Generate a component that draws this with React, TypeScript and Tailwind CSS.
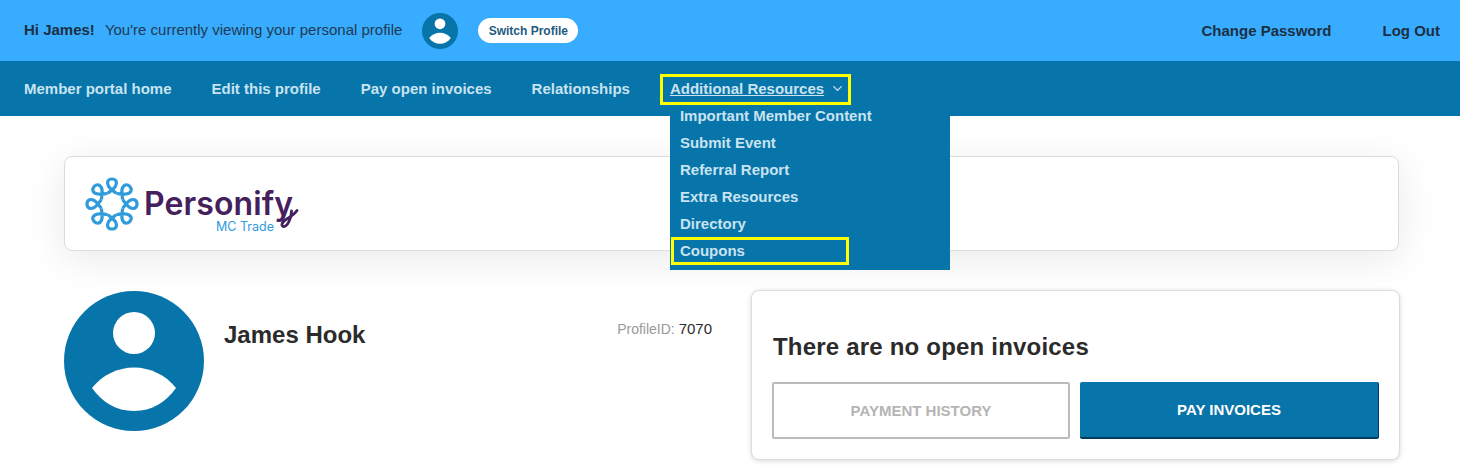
import React from 'react';
import { ChevronDown } from 'lucide-react';

const NAV_LINKS = ['Member portal home', 'Edit this profile', 'Pay open invoices', 'Relationships'];
const MENU_ITEMS = ['Important Member Content', 'Submit Event', 'Referral Report', 'Extra Resources', 'Directory'];
const PETAL_ANGLES = [0, 45, 90, 135, 180, 225, 270, 315];

function UserAvatar({ className }: { className: string }) {
  return (
    <svg viewBox="0 0 140 140" className={className}>
      <circle cx="70" cy="70" r="70" fill="#0774aa" />
      <circle cx="70" cy="42" r="21" fill="#fff" />
      <path d="M28 97C38 84 54 76.5 70 76.5S102 84 112 97C102 111 88 120 70 120S38 111 28 97Z" fill="#fff" />
    </svg>
  );
}

function PersonifyLogo() {
  return (
    <div className="flex items-start">
      <svg viewBox="-27 -27 54 54" className="w-[54px] h-[54px] shrink-0">
        {PETAL_ANGLES.map(a => (
          <path
            key={a}
            transform={`rotate(${a})`}
            d="M-4.35 -10.5C-2.5 -12.5 2 -15 3.6 -18C5.6 -21.8 4 -25 0 -25C-4 -25 -5.6 -21.8 -3.6 -18C-2 -15 2.5 -12.5 4.35 -10.5"
            fill="none"
            stroke="#2f9bdb"
            strokeWidth="3.2"
          />
        ))}
      </svg>
      <div className="relative ml-[5px] mt-[12px] w-[160px] h-[42px]">
        <div className="font-['Inter',sans-serif] font-semibold text-[32px] leading-[30px] tracking-[0.1px] text-[#44205c]">Personify</div>
        <svg viewBox="0 0 22 22" className="absolute left-[134px] top-[19px] w-[22px] h-[22px]">
          <path d="M13.5 3C13.5 11 9 19 5.5 18.5C2.5 18 4 14 8 11.5C12 9 16 7 19 2.5" fill="none" stroke="#44205c" strokeWidth="2.8" strokeLinecap="round" />
        </svg>
        <div className="absolute left-[72px] top-[30px] font-['Inter',sans-serif] text-[12.5px] leading-[16px] text-[#2f9bdb]">MC Trade</div>
      </div>
    </div>
  );
}

export default function App() {
  return (
    <div className="w-[1460px] h-[467px] overflow-hidden bg-white font-['Liberation_Sans',Arial,sans-serif]">
      {/* Top bar */}
      <div className="h-[61px] bg-[#38acff] pl-[24px] pr-[20px] flex items-center justify-between text-[#1c2f42]">
        <div className="flex items-center">
          <span className="text-[15px] font-bold">Hi James!</span>
          <span className="ml-[10px] text-[15px] text-[#1f3a52]">You're currently viewing your personal profile</span>
          <UserAvatar className="ml-[20px] w-[36px] h-[36px]" />
          <button className="ml-[20px] w-[100px] h-[25px] rounded-full bg-white text-[12px] font-bold text-[#1f5a80]">
            Switch Profile
          </button>
        </div>
        <div className="flex items-center gap-[51px] text-[15px] font-bold pt-px">
          <span>Change Password</span>
          <span>Log Out</span>
        </div>
      </div>

      {/* Nav */}
      <div className="relative z-10 h-[55px] bg-[#0774aa] pl-[24px] flex items-center gap-[40px] text-[15px] leading-[23px] font-bold text-[#c9e3f0]">
        {NAV_LINKS.map(link => (
          <span key={link}>{link}</span>
        ))}
        <div className="relative h-[23px]">
          <div className="flex items-center gap-[6px] underline">
            <span>Additional Resources</span>
            <ChevronDown className="w-[15px] h-[15px]" strokeWidth={2.2} />
          </div>
          <div className="absolute left-0 top-[24px] w-[280px] h-[169px] bg-[#0774aa] pl-[10px] pt-px flex flex-col">
            {MENU_ITEMS.map(item => (
              <div key={item} className="h-[27px] leading-[27px]">{item}</div>
            ))}
            <div className="h-[27px] leading-[27px]">Coupons</div>
            <div className="absolute left-[1px] top-[136px] w-[178px] h-[28px] border-[3px] border-[#ffff00]" />
          </div>
          <div className="absolute -left-[10px] -top-[3px] w-[191px] h-[31px] border-[3px] border-[#ffff00]" />
        </div>
      </div>

      {/* Logo card */}
      <div className="pt-[40px] pl-[64px] pr-[61px]">
        <div className="h-[95px] rounded-[8px] border border-[#dcdcdc] bg-white shadow-[0_8px_40px_rgba(0,0,0,0.09)] pl-[20px] pt-[20px]">
          <PersonifyLogo />
        </div>
      </div>

      {/* Profile + invoices */}
      <div className="pt-[39px] pl-[64px] flex items-start">
        <div className="w-[648px] flex items-start pt-px">
          <UserAvatar className="w-[140px] h-[140px] shrink-0" />
          <div className="ml-[20px] mt-[29px] text-[24px] leading-[30px] font-bold text-[#2b2b2b]">James Hook</div>
          <div className="ml-auto mt-[29px] text-[14px] leading-[18px] text-[#9a9a9a]">
            ProfileID: <span className="text-[15px] text-[#2b2b2b]">7070</span>
          </div>
        </div>
        <div className="ml-[39px] w-[649px] h-[170px] rounded-[8px] border border-[#dcdcdc] bg-white shadow-[0_1px_5px_rgba(0,0,0,0.15)] pl-[20px] pt-[41px]">
          <div className="ml-px text-[24px] leading-[30px] tracking-[0.2px] font-bold text-[#2b2b2b]">There are no open invoices</div>
          <div className="mt-[20px] flex gap-[10px]">
            <button className="w-[298px] h-[57px] border-2 border-[#bbbbbb] rounded-[2px] bg-white pt-px text-[15px] font-bold text-[#b5b5b5]">
              PAYMENT HISTORY
            </button>
            <button className="w-[299px] h-[57px] border-b-2 border-r border-[#003a5c] rounded-[2px] bg-[#0774aa] pt-[2px] text-[15px] font-bold text-white">
              PAY INVOICES
            </button>
          </div>
        </div>
      </div>
    </div>
  );
}
